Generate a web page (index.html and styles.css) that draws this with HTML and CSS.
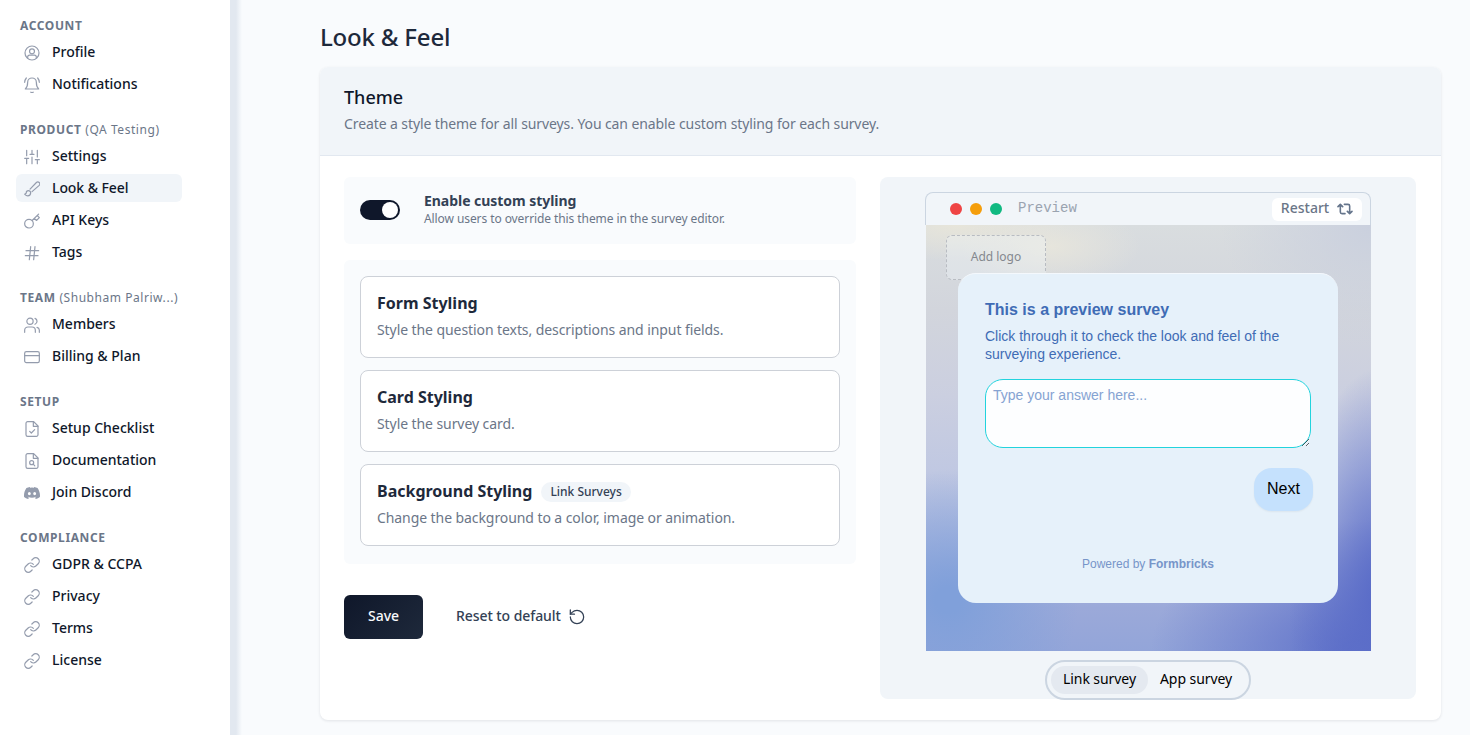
FILE: index.html
```html
<!DOCTYPE html>
<html lang="en">
<head>
<meta charset="utf-8">
<title>Look &amp; Feel</title>
<link rel="stylesheet" href="styles.css">
</head>
<body>
<svg class="defs" width="0" height="0">
  <symbol id="link" viewBox="0 0 24 24"><path d="M10 13a5.300 5.300 0 0 0 7.800.54l3.500-3.400a5.300 5.300 0 0 0-7.500-7.500l-2 1.900"/><path d="M14 11a5.300 5.300 0 0 0-7.800-.54l-3.500 3.400a5.300 5.300 0 0 0 7.500 7.500l2-1.900"/></symbol>
</svg>
<div class="app">
  <aside class="sidebar">
    <nav class="group">
      <h2 class="heading">ACCOUNT</h2>
      <a class="item"><svg class="icon" viewBox="0 0 24 24"><circle cx="12" cy="12" r="10.500"/><circle cx="12" cy="9.500" r="3.700"/><path d="M5.500 19.500v-1.200a3 3 0 0 1 3-3h7a3 3 0 0 1 3 3v1.200"/></svg>Profile</a>
      <a class="item"><svg class="icon" viewBox="0 0 24 24"><path d="M5.500 8a6.500 6.500 0 0 1 13 0c0 7 3.500 10 3.500 10H2s3.500-3 3.500-10"/><path d="M10.300 22.800a2.500 2.500 0 0 0 3.400 0"/><path d="M3.500 1.500C2 3.300 1 5.500 1 8"/><path d="M23 8c0-2.500-1-4.700-2.500-6.500"/></svg>Notifications</a>
    </nav>
    <nav class="group">
      <h2 class="heading">PRODUCT <span>(QA Testing)</span></h2>
      <a class="item"><svg class="icon" viewBox="0 0 24 24"><path d="M4 22v-8M4 10V2M12 22V12M12 8V2M20 22v-6M20 12V2M1 14h6M9 8h6M17 16h6"/></svg>Settings</a>
      <a class="item active"><svg class="icon" viewBox="0 0 24 24"><path d="m9.100 12.100 9.500-9.800a2.900 2.900 0 0 1 4.200 4.200l-10.700 9.400"/><path d="M6.600 14.400c-1.900 0-3.200 1.500-3.200 3.300 0 1.500-2.700 1.700-2.200 2.300 1.200 1.200 2.700 2.200 4.400 2.200 2.400 0 4.400-2 4.400-4.500 0-1.800-1.500-3.300-3.400-3.300z"/></svg>Look &amp; Feel</a>
      <a class="item"><svg class="icon" viewBox="0 0 24 24"><circle cx="7.500" cy="16" r="6.500"/><path d="m12.200 11.300 9.700-9.700M15.500 8l3.200 3.200L23 6.900l-3.200-3.200"/></svg>API Keys</a>
      <a class="item"><svg class="icon" viewBox="0 0 24 24"><path d="M3 8.500h19M2 16h19M10 2.500 8 22M16.500 2.500l-2 19.500"/></svg>Tags</a>
    </nav>
    <nav class="group">
      <h2 class="heading">TEAM <span>(Shubham Palriw...)</span></h2>
      <a class="item"><svg class="icon" viewBox="0 0 24 24"><path d="M17 23v-3a5 5 0 0 0-5-5H6a5 5 0 0 0-5 5v3"/><circle cx="9" cy="6.500" r="4.700"/><path d="M23 23v-3.500a4.500 4.500 0 0 0-3.500-4M16.500 2.100a4.700 4.700 0 0 1 0 8.800"/></svg>Members</a>
      <a class="item"><svg class="icon" viewBox="0 0 24 24"><rect x="1" y="4" width="22" height="16.500" rx="2.500"/><path d="M1 10h22"/></svg>Billing &amp; Plan</a>
    </nav>
    <nav class="group">
      <h2 class="heading">SETUP</h2>
      <a class="item"><svg class="icon" viewBox="0 0 24 24"><path d="M14.500 1H5.500A2.500 2.500 0 0 0 3 3.500v17A2.500 2.500 0 0 0 5.500 23h13a2.500 2.500 0 0 0 2.500-2.500V7.500Z"/><path d="M14 1v7h7M8.500 15.500l2.500 2.500 5-5"/></svg>Setup Checklist</a>
      <a class="item"><svg class="icon" viewBox="0 0 24 24"><path d="M14.500 1H5.500A2.500 2.500 0 0 0 3 3.500v17A2.500 2.500 0 0 0 5.500 23h13a2.500 2.500 0 0 0 2.500-2.500V7.500Z"/><path d="M14 1v7h7M13.800 16.800l2.400 2.400"/><circle cx="11.500" cy="14.500" r="3"/></svg>Documentation</a>
      <a class="item"><svg class="icon solid" viewBox="0 0 16 16"><path d="M13.545 2.907a13.200 13.200 0 0 0-3.257-1.011.05.05 0 0 0-.052.025c-.141.25-.297.577-.406.833a12.200 12.200 0 0 0-3.658 0 8 8 0 0 0-.412-.833.05.05 0 0 0-.052-.025c-1.125.194-2.220.534-3.257 1.011a.04.04 0 0 0-.021.018C.356 6.024-.213 9.047.066 12.032q.003.022.021.037a13.300 13.300 0 0 0 3.995 2.020.05.05 0 0 0 .056-.019q.463-.63.818-1.329a.05.05 0 0 0-.01-.059l-.018-.011a9 9 0 0 1-1.248-.595.05.05 0 0 1-.02-.066l.015-.019q.127-.095.248-.195a.05.05 0 0 1 .051-.007c2.619 1.196 5.454 1.196 8.041 0a.05.05 0 0 1 .053.007q.121.1.248.195a.05.05 0 0 1-.004.085 8 8 0 0 1-1.249.594.05.05 0 0 0-.03.03.05.05 0 0 0 .003.041c.24.465.515.909.817 1.329a.05.05 0 0 0 .056.019 13.200 13.200 0 0 0 4.001-2.020.05.05 0 0 0 .021-.037c.334-3.451-.559-6.449-2.366-9.106a.03.03 0 0 0-.02-.019m-8.198 7.307c-.789 0-1.438-.724-1.438-1.612s.637-1.613 1.438-1.613c.807 0 1.450.73 1.438 1.613 0 .888-.637 1.612-1.438 1.612m5.316 0c-.788 0-1.438-.724-1.438-1.612s.637-1.613 1.438-1.613c.807 0 1.451.73 1.438 1.613 0 .888-.631 1.612-1.438 1.612"/></svg>Join Discord</a>
    </nav>
    <nav class="group">
      <h2 class="heading">COMPLIANCE</h2>
      <a class="item"><svg class="icon"><use href="#link"/></svg>GDPR &amp; CCPA</a>
      <a class="item"><svg class="icon"><use href="#link"/></svg>Privacy</a>
      <a class="item"><svg class="icon"><use href="#link"/></svg>Terms</a>
      <a class="item"><svg class="icon"><use href="#link"/></svg>License</a>
    </nav>
  </aside>
  <div class="divider"></div>
  <main class="main">
    <h1 class="title">Look &amp; Feel</h1>
    <section class="card">
      <header class="card-head">
        <h3 class="card-title">Theme</h3>
        <p class="card-desc">Create a style theme for all surveys. You can enable custom styling for each survey.</p>
      </header>
      <div class="card-body">
        <div class="settings">
          <div class="enable">
            <span class="switch"><span class="knob"></span></span>
            <div class="enable-copy">
              <p class="enable-title">Enable custom styling</p>
              <p class="enable-desc">Allow users to override this theme in the survey editor.</p>
            </div>
          </div>
          <div class="options">
            <div class="option"><h4>Form Styling</h4><p>Style the question texts, descriptions and input fields.</p></div>
            <div class="option"><h4>Card Styling</h4><p>Style the survey card.</p></div>
            <div class="option"><h4>Background Styling <span class="badge">Link Surveys</span></h4><p>Change the background to a color, image or animation.</p></div>
          </div>
          <div class="actions">
            <button class="save">Save</button>
            <button class="reset">Reset to default <svg class="reset-icon" viewBox="0 0 24 24"><path d="M2 12a10 10 0 1 0 10-10 10.800 10.800 0 0 0-7.400 3L2 7.700"/><path d="M2 1.500v6.200h6.200"/></svg></button>
          </div>
        </div>
        <div class="panel">
          <div class="window">
            <div class="bar">
              <i class="dot red"></i><i class="dot amber"></i><i class="dot green"></i>
              <span class="bar-title">Preview</span>
              <span class="restart">Restart <svg class="restart-icon" viewBox="0 0 24 24"><path d="m1.500 8.500 3.500-3.500 3.500 3.500M12 19H7.500A2.500 2.500 0 0 1 5 16.500V5.500M22.500 15.500 19 19l-3.500-3.500M11 5h5.500A2.500 2.500 0 0 1 19 7.500v11"/></svg></span>
            </div>
            <div class="scene">
              <div class="logo">Add logo</div>
              <div class="survey">
                <h5>This is a preview survey</h5>
                <p class="survey-text">Click through it to check the look and feel of the surveying experience.</p>
                <textarea class="answer" placeholder="Type your answer here..."></textarea>
                <button class="next">Next</button>
                <p class="powered">Powered by <b>Formbricks</b></p>
              </div>
            </div>
          </div>
          <div class="tabs"><span class="tab on">Link survey</span><span class="tab">App survey</span></div>
        </div>
      </div>
    </section>
  </main>
</div>
</body>
</html>
```
FILE: styles.css
```css
* { box-sizing: border-box; }
body { margin: 0; font-family: "Noto Sans", sans-serif; color: #1e293b; background: #f9fbfd; overflow: hidden; }
h1, h2, h3, h4, h5, p { margin: 0; }
button { font-family: inherit; border: 0; background: none; padding: 0; }
.defs { position: absolute; }
.app { display: flex; height: 735px; }

.sidebar { width: 230px; background: #fff; padding: 14px 16px 0; display: flex; flex-direction: column; gap: 20px; }
.group { display: flex; flex-direction: column; gap: 4px; }
.heading { height: 20px; padding-left: 4px; font-size: 12px; line-height: 24px; font-weight: 700; letter-spacing: .6px; color: #6b7688; white-space: nowrap; }
.heading span { font-weight: 400; letter-spacing: .55px; }
.item { display: flex; align-items: center; gap: 12px; width: 166px; height: 28px; padding: 0 8px; border-radius: 6px; font-size: 14px; line-height: 20px; font-weight: 500; color: #0f172a; white-space: nowrap; }
.item.active { background: #f1f5f9; letter-spacing: -.08px; }
.icon { width: 16px; height: 16px; fill: none; stroke: #949cad; stroke-width: 1.800; stroke-linecap: round; stroke-linejoin: round; position: relative; top: 1px; }
.icon.solid { fill: #949cad; stroke: none; }
.divider { width: 12px; background: linear-gradient(90deg, #e2e8f0 0 6px, #f9fbfd 12px); }

.main { flex: 1; padding: 21px 29px 0 78px; }
.title { font-size: 24px; line-height: 32px; font-weight: 500; letter-spacing: -.2px; margin-bottom: 14px; }
.card { height: 653px; background: #fff; border-radius: 8px; box-shadow: 0 1px 3px rgba(15,23,42,.1); overflow: hidden; }
.card-head { height: 89px; padding: 16px 24px; background: #f1f5f9; border-bottom: 1px solid #e2e8f0; }
.card-title { font-size: 18px; line-height: 28px; font-weight: 500; color: #0f172a; }
.card-desc { font-size: 14px; line-height: 20px; letter-spacing: -.095px; color: #6b7688; margin-top: 3px; }
.card-body { display: flex; gap: 24px; padding: 21px 24px; }

.settings { width: 512px; }
.enable { display: flex; align-items: center; gap: 24px; height: 67px; padding: 0 16px 2px; border-radius: 6px; background: #f9fbfd; }
.switch { display: flex; justify-content: flex-end; align-items: center; width: 40px; height: 20px; padding: 2px; border-radius: 10px; background: #0f172a; }
.knob { width: 16px; height: 16px; border-radius: 50%; background: #fff; }
.enable-title { font-size: 14px; line-height: 18px; padding-bottom: 1px; font-weight: 700; letter-spacing: -.04px; color: #334155; }
.enable-desc { font-size: 12px; line-height: 16px; letter-spacing: -.085px; color: #6b7688; }
.options { display: flex; flex-direction: column; gap: 12px; margin-top: 16px; padding: 16px 16px 18px; border-radius: 6px; background: #f9fbfd; }
.option { height: 82px; padding: 14px 16px; border: 1px solid #cdd1d8; border-radius: 8px; background: #fff; }
.option h4 { display: flex; align-items: center; gap: 9px; font-size: 16px; line-height: 24px; font-weight: 700; }
.option p { margin-top: 5px; font-size: 14px; line-height: 20px; letter-spacing: -.08px; color: #6b7688; }
.badge { padding: 2px 9px; border-radius: 11px; background: #f1f5f9; font-size: 12px; line-height: 16px; font-weight: 500; color: #334155; position: relative; top: 1px; }
.actions { display: flex; gap: 33px; margin-top: 31px; align-items: center; }
.save { width: 79px; height: 44px; border-radius: 6px; background: linear-gradient(135deg, #0f172a, #1e293b); font-size: 14px; font-weight: 500; color: #f8fafc; padding-bottom: 3px; }
.reset { display: flex; align-items: center; gap: 8px; font-size: 14px; line-height: 20px; font-weight: 500; letter-spacing: -.07px; color: #334155; padding-bottom: 2px; }
.reset-icon { width: 16px; height: 16px; fill: none; stroke: #334155; stroke-width: 1.900; stroke-linecap: round; stroke-linejoin: round; position: relative; top: 1px; }

.panel { display: flex; flex-direction: column; align-items: center; gap: 9px; width: 536px; height: 522px; padding-top: 15px; border-radius: 8px; background: #f1f5f9; }
.window { width: 446px; height: 459px; }
.bar { display: flex; align-items: center; height: 33px; padding: 0 8px 0 24px; border: 1px solid #cbd5e1; border-bottom: 0; border-radius: 8px 8px 0 0; }
.dot { width: 12px; height: 12px; margin-right: 8px; border-radius: 50%; }
.red { background: #ef4444; }
.amber { background: #f59e0b; }
.green { background: #10b981; }
.bar-title { flex: 1; margin-left: 8px; padding-bottom: 3px; font: 14px/20px "Liberation Mono", monospace; color: #9aa3b0; }
.restart { display: flex; align-items: center; justify-content: center; gap: 8px; width: 90px; height: 23px; border-radius: 6px; background: #fff; font-size: 14px; line-height: 20px; font-weight: 500; color: #6b7688; padding-bottom: 2px; }
.restart-icon { width: 16px; height: 16px; fill: none; stroke: #64748b; stroke-width: 2.400; stroke-linecap: round; stroke-linejoin: round; position: relative; top: 1px; }

.scene { position: relative; height: 426px; margin-left: 1px; padding: 48px 32px 0; background:
  radial-gradient(ellipse 90px 240px at 102% 90%, #5b6dc8 10%, rgba(91,109,200,0) 100%),
  radial-gradient(ellipse 220px 130px at 100% 100%, rgba(91,109,200,.9) 10%, rgba(91,109,200,0) 100%),
  radial-gradient(ellipse 130px 130px at 5% 88%, #80a0da 10%, rgba(128,160,218,0) 100%),
  radial-gradient(ellipse 90px 40px at 28% 5%, rgba(232,230,220,.9) 0%, rgba(232,230,220,0) 100%),
  radial-gradient(ellipse 110px 36px at 7% 0, #e7e5da 0%, rgba(231,229,218,0) 100%),
  radial-gradient(ellipse 150px 120px at 100% 0, #cad0de 0%, rgba(202,208,222,0) 100%),
  linear-gradient(180deg, #d9dddf 0%, #d2d5dc 20%, #cbcfe0 40%, #c0c8e2 58%, #b0badf 76%, #9ba9d9 90%, #93a5d9 100%); }
.logo { position: absolute; left: 20px; top: 10px; width: 100px; height: 45px; border: 1px dashed #b8bcc2; border-radius: 6px; background: rgba(241,245,249,.35); font-size: 12px; line-height: 42px; text-align: center; color: #84888e; }
.survey { position: relative; width: 380px; height: 330px; padding: 27px; border-radius: 18px; border-top: 1px solid #f4f8fc; background: #e6f1fa; font-family: "Liberation Sans", sans-serif; color: #3f6cb5; display: flex; flex-direction: column; }
.survey h5 { font-size: 16px; line-height: 18px; font-weight: 700; }
.survey-text { margin-top: 8px; font-size: 14px; line-height: 18px; width: 310px; }
.answer { display: block; width: 326px; height: 69px; margin: 16px 0 0; padding: 6px 7px; border: 1px solid #22d3dd; border-radius: 18px; background: #fdfeff; font: 14px/18px "Liberation Sans", sans-serif; outline: 0; resize: vertical; flex: none; }
.answer::placeholder { color: #86a3d2; }
.next { width: 59px; height: 43px; margin: 20px -2px 0 auto; border-radius: 18px; background: #c5e1fd; font-size: 16px; color: #000; flex: none; box-shadow: 0 1px 2px rgba(0,0,0,.05); padding-bottom: 2px; font-family: "Liberation Sans", sans-serif; }
.powered { margin-top: 45px; text-align: center; font-size: 12px; line-height: 16px; color: #7795c9; }

.tabs { display: flex; flex: none; align-items: center; width: 206px; height: 40px; padding: 0 4px; border: 2px solid #cbd5e1; border-radius: 20px; font-size: 14px; line-height: 26px; font-weight: 450; letter-spacing: -.07px; color: #000; }
.tab { height: 28px; padding: 0 12px; border-radius: 14px; white-space: nowrap; }
.tab.on { background: #e4e9f0; }
```
